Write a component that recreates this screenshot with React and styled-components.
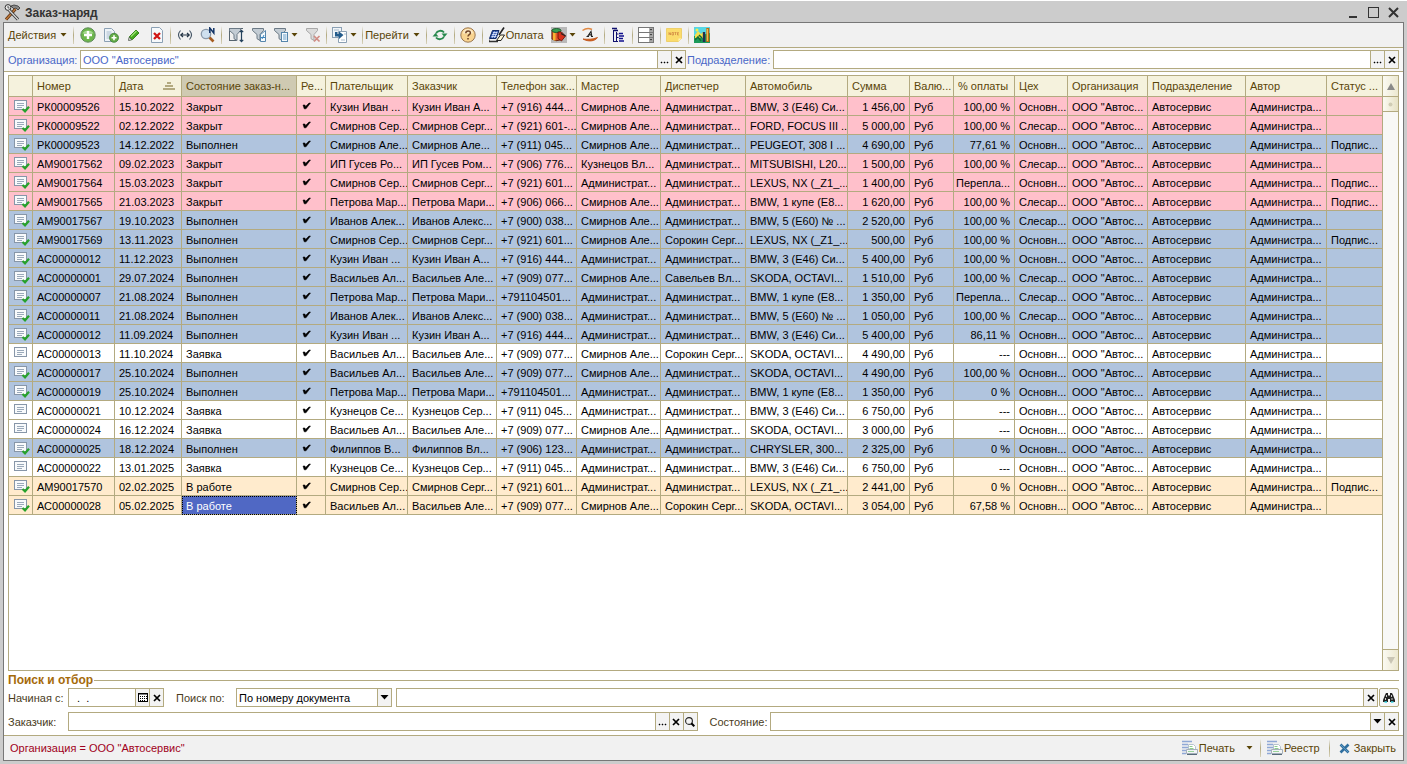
import React, { useState } from 'react';
import styled, { createGlobalStyle, css } from 'styled-components';

const LINE = '#b3aa80';
const BROWN = '#5a4508';

const ROWS = [
    ['closed', 'РК00009526', '15.10.2022', 'Закрыт', 'Кузин Иван ...', 'Кузин Иван А...', '+7 (916) 444...', 'Смирнов Але...', 'Администрат...', 'BMW, 3 (E46) Си...', '1 456,00', '100,00 %', 'Основн...', ''],
    ['closed', 'РК00009522', '02.12.2022', 'Закрыт', 'Смирнов Сер...', 'Смирнов Серг...', '+7 (921) 601-...', 'Смирнов Але...', 'Администрат...', 'FORD, FOCUS III ...', '5 000,00', '100,00 %', 'Слесар...', ''],
    ['done', 'РК00009523', '14.12.2022', 'Выполнен', 'Смирнов Але...', 'Смирнов Але...', '+7 (911) 045...', 'Смирнов Але...', 'Администрат...', 'PEUGEOT, 308 I ...', '4 690,00', '77,61 %', 'Основн...', 'Подпис...'],
    ['closed', 'АМ90017562', '09.02.2023', 'Закрыт', 'ИП Гусев Ро...', 'ИП Гусев Ром...', '+7 (906) 776...', 'Кузнецов Вл...', 'Администрат...', 'MITSUBISHI, L20...', '1 500,00', '100,00 %', 'Слесар...', ''],
    ['closed', 'АМ90017564', '15.03.2023', 'Закрыт', 'Смирнов Сер...', 'Смирнов Серг...', '+7 (921) 601...', 'Администрат...', 'Администрат...', 'LEXUS, NX (_Z1_...', '1 400,00', 'Перепла...', 'Основн...', 'Подпис...'],
    ['closed', 'АМ90017565', '21.03.2023', 'Закрыт', 'Петрова Мар...', 'Петрова Мари...', '+7 (906) 066...', 'Смирнов Але...', 'Администрат...', 'BMW, 1 купе (E8...', '1 620,00', '100,00 %', 'Слесар...', 'Подпис...'],
    ['done', 'АМ90017567', '19.10.2023', 'Выполнен', 'Иванов Алек...', 'Иванов Алекс...', '+7 (900) 038...', 'Смирнов Але...', 'Администрат...', 'BMW, 5 (E60) № ...', '2 520,00', '100,00 %', 'Слесар...', ''],
    ['done', 'АМ90017569', '13.11.2023', 'Выполнен', 'Смирнов Сер...', 'Смирнов Серг...', '+7 (921) 601...', 'Смирнов Але...', 'Сорокин Серг...', 'LEXUS, NX (_Z1_...', '500,00', '100,00 %', 'Основн...', 'Подпис...'],
    ['done', 'АС00000012', '11.12.2023', 'Выполнен', 'Кузин Иван ...', 'Кузин Иван А...', '+7 (916) 444...', 'Администрат...', 'Администрат...', 'BMW, 3 (E46) Си...', '5 400,00', '100,00 %', 'Основн...', ''],
    ['done', 'АС00000001', '29.07.2024', 'Выполнен', 'Васильев Ал...', 'Васильев Але...', '+7 (909) 077...', 'Смирнов Але...', 'Савельев Вл...', 'SKODA, OCTAVI...', '1 510,00', '100,00 %', 'Слесар...', ''],
    ['done', 'АС00000007', '21.08.2024', 'Выполнен', 'Петрова Мар...', 'Петрова Мари...', '+791104501...', 'Администрат...', 'Администрат...', 'BMW, 1 купе (E8...', '1 350,00', 'Перепла...', 'Слесар...', ''],
    ['done', 'АС00000011', '21.08.2024', 'Выполнен', 'Иванов Алек...', 'Иванов Алекс...', '+7 (900) 038...', 'Администрат...', 'Администрат...', 'BMW, 5 (E60) № ...', '1 050,00', '100,00 %', 'Слесар...', ''],
    ['done', 'АС00000012', '11.09.2024', 'Выполнен', 'Кузин Иван ...', 'Кузин Иван А...', '+7 (916) 444...', 'Администрат...', 'Администрат...', 'BMW, 3 (E46) Си...', '5 400,00', '86,11 %', 'Основн...', ''],
    ['request', 'АС00000013', '11.10.2024', 'Заявка', 'Васильев Ал...', 'Васильев Але...', '+7 (909) 077...', 'Смирнов Але...', 'Сорокин Серг...', 'SKODA, OCTAVI...', '4 490,00', '---', 'Основн...', ''],
    ['done', 'АС00000017', '25.10.2024', 'Выполнен', 'Васильев Ал...', 'Васильев Але...', '+7 (909) 077...', 'Смирнов Але...', 'Администрат...', 'SKODA, OCTAVI...', '4 490,00', '100,00 %', 'Основн...', ''],
    ['done', 'АС00000019', '25.10.2024', 'Выполнен', 'Петрова Мар...', 'Петрова Мари...', '+791104501...', 'Администрат...', 'Администрат...', 'BMW, 1 купе (E8...', '1 350,00', '0 %', 'Основн...', ''],
    ['request', 'АС00000021', '10.12.2024', 'Заявка', 'Кузнецов Се...', 'Кузнецов Сер...', '+7 (911) 045...', 'Администрат...', 'Администрат...', 'BMW, 3 (E46) Си...', '6 750,00', '---', 'Основн...', ''],
    ['request', 'АС00000024', '16.12.2024', 'Заявка', 'Васильев Ал...', 'Васильев Але...', '+7 (909) 077...', 'Смирнов Але...', 'Администрат...', 'SKODA, OCTAVI...', '3 000,00', '---', 'Основн...', ''],
    ['done', 'АС00000025', '18.12.2024', 'Выполнен', 'Филиппов В...', 'Филиппов Вл...', '+7 (906) 123...', 'Администрат...', 'Администрат...', 'CHRYSLER, 300...', '2 325,00', '0 %', 'Основн...', ''],
    ['request', 'АС00000022', '13.01.2025', 'Заявка', 'Кузнецов Се...', 'Кузнецов Сер...', '+7 (911) 045...', 'Администрат...', 'Администрат...', 'BMW, 3 (E46) Си...', '6 750,00', '---', 'Основн...', ''],
    ['work', 'АМ90017570', '02.02.2025', 'В работе', 'Смирнов Сер...', 'Смирнов Серг...', '+7 (921) 601...', 'Администрат...', 'Администрат...', 'LEXUS, NX (_Z1_...', '2 441,00', '0 %', 'Основн...', 'Подпис...'],
    ['work', 'АС00000028', '05.02.2025', 'В работе', 'Васильев Ал...', 'Васильев Але...', '+7 (909) 077...', 'Смирнов Але...', 'Сорокин Серг...', 'SKODA, OCTAVI...', '3 054,00', '67,58 %', 'Основн...', ''],
];

const COLUMNS = [
    ['', 24], ['Номер', 82], ['Дата', 67], ['Состояние заказ-н...', 115], ['Ре...', 29],
    ['Плательщик', 82], ['Заказчик', 89], ['Телефон зак...', 80], ['Мастер', 84], ['Диспетчер', 85],
    ['Автомобиль', 102], ['Сумма', 62], ['Валю...', 44], ['% оплаты', 61], ['Цех', 53],
    ['Организация', 80], ['Подразделение', 98], ['Автор', 81], ['Статус ...', 56],
];

const ROW_COLORS = {
    closed: '#ffc0cb',
    done: '#b0c4de',
    request: '#ffffff',
    work: '#ffebcd',
};

/* ---------- icons ---------- */

const Svg = ({ w = 16, h = 16, children }) => (
    <svg width={w} height={h} viewBox={`0 0 ${w} ${h}`} fill="none" aria-hidden="true">{children}</svg>
);

const Caret = ({ color = BROWN, big }) => (
    big
        ? <Svg w={9} h={5}><path d="M0.500 0h8L4.500 4.500z" fill={color} /></Svg>
        : <Svg w={7} h={4}><path d="M0.500 0h6L3.500 3.500z" fill={color} /></Svg>
);

const CrossIcon = () => (
    <Svg w={8} h={8}><path d="M1 1l6 6M7 1L1 7" stroke="#000" strokeWidth="1.7" /></Svg>
);

const DotsIcon = () => (
    <Svg w={9} h={8}><path d="M1 6h1v1H1zM4 6h1v1H4zM7 6h1v1H7z" fill="#000" stroke="#000" strokeWidth="0.5" /></Svg>
);

const CalendarIcon = () => (
    <Svg w={10} h={9}>
        <rect x="0.5" y="0.5" width="9" height="8" fill="#fff" stroke="#000" />
        <path d="M0 1h10" stroke="#000" />
        <path d="M2 3h1v1H2zM4 3h1v1H4zM6 3h1v1H6zM8 3h1v1H8zM2 5h1v1H2zM4 5h1v1H4zM6 5h1v1H6zM8 5h1v1H8zM2 7h1v1H2zM4 7h1v1H4zM6 7h1v1H6z" fill="#000" />
    </Svg>
);

const LensIcon = () => (
    <Svg w={10} h={10}>
        <circle cx="4" cy="4" r="3.4" stroke="#222" strokeWidth="1.1" />
        <path d="M6.3 6.3L9.3 9.3" stroke="#000" strokeWidth="2" />
    </Svg>
);

const BinocularsIcon = () => (
    <Svg w={12} h={12}>
        <path d="M3 1h2v2l1 1 1-1V1h2l1 2 2 5v2H7V7H5v3H0V8l2-5z" fill="#222" />
        <path d="M1.5 10h2.5M8 10h2.5" stroke="#38d8e8" strokeWidth="1.6" />
        <path d="M3.5 3v2M8.5 3v2M2.5 6v2M9 6v2" stroke="#ddd" strokeWidth="0.9" />
    </Svg>
);

const ToolsIcon = () => (
    <Svg w={17} h={17}>
        <circle cx="4" cy="3.5" r="2.9" fill="#e8e8e8" stroke="#333" />
        <path d="M4 2v2h1.5" stroke="#333" strokeWidth="0.8" />
        <path d="M7 2l3-1 4 1 2 2-2 2-2-2-2 1z" fill="#888" stroke="#333" strokeWidth="0.8" />
        <path d="M11.5 5L2 15.5" stroke="#5b2f10" strokeWidth="3" />
        <path d="M11.5 5L2 15.5" stroke="#c07b3c" strokeWidth="1.4" />
        <path d="M5 6l9 9.5" stroke="#333" strokeWidth="3" />
        <path d="M5 6l9 9.5" stroke="#d8d8d8" strokeWidth="1.3" />
    </Svg>
);

const AddIcon = () => (
    <Svg>
        <circle cx="8" cy="8" r="7.2" fill="#6cb64c" stroke="#5f8a5c" />
        <path d="M2.5 6.5a6 5 0 0111 0z" fill="#a5d890" />
        <path d="M8 4v8M4 8h8" stroke="#fff" strokeWidth="2.4" />
    </Svg>
);

const CopyIcon = () => (
    <Svg>
        <path d="M1.5 1.5h7l3 3v10h-10z" fill="#eef3f8" stroke="#8ba0b4" />
        <path d="M3.5 5h5M3.5 7h5M3.5 9h3M3.5 11h3" stroke="#a9bccd" />
        <circle cx="11" cy="10.8" r="4.5" fill="#62ab47" stroke="#3e7f3a" strokeWidth="0.8" />
        <path d="M11 8.3v5M8.5 10.8h5" stroke="#fff" strokeWidth="1.6" />
    </Svg>
);

const PencilIcon = () => (
    <Svg>
        <path d="M3.5 9.5L10 3l3 3-6.5 6.5-3.5.5z" fill="#45a81e" stroke="#2b7a12" strokeWidth="0.9" />
        <path d="M5 9.5l5.5-5.5" stroke="#9be372" strokeWidth="1.3" />
        <path d="M2.5 13.5l.8-3.2 2.4 2.4z" fill="#fff" stroke="#444" strokeWidth="0.7" />
    </Svg>
);

const DeleteIcon = () => (
    <Svg>
        <path d="M2.5 0.5h8l3 3v12h-11z" fill="#f6f9fc" stroke="#8ba0b4" />
        <path d="M5 6l6 6M11 6l-6 6" stroke="#d01616" strokeWidth="2.3" />
    </Svg>
);

const WidthIcon = () => (
    <Svg>
        <path d="M3.5 3.5Q-0.5 8 3.5 12.5M12.5 3.5Q16.5 8 12.5 12.5" stroke="#456" strokeWidth="1.1" />
        <path d="M3.5 8h9M6 6L3.8 8 6 10M10 6l2.2 2L10 10" stroke="#234" strokeWidth="1.2" />
    </Svg>
);

const FindIcon = () => (
    <Svg>
        <circle cx="6" cy="7" r="4.7" fill="#cfe0ef" stroke="#8a99aa" strokeWidth="1.3" />
        <path d="M9.5 10.5l4 4" stroke="#a65c20" strokeWidth="2.6" />
        <path d="M9.8 6V1l4 5V1" stroke="#113366" strokeWidth="1.5" />
    </Svg>
);

const Funnel = ({ off }) => (
    <path d="M1.5 1.5h11v2L9 7.5v6l-3-1.8V7.5l-4.5-4z" fill={off ? '#dcdcdc' : '#c3ccd4'} stroke={off ? '#a8a8a8' : '#6c7a86'} />
);

const FilterSortIcon = () => (
    <Svg>
        <path d="M1.5 1v13M1 1.5h14M1 13.5h8" stroke="#56646f" />
        <Funnel />
        <path d="M13.5 3.5v11M11.8 5.2l1.700-1.800 1.700 1.800M11.800 12.800l1.700 1.800 1.700-1.800" stroke="#23415c" strokeWidth="1.2" />
    </Svg>
);

const FilterValueIcon = () => (
    <Svg>
        <Funnel />
        <path d="M9.5 7.5l5-4v11h-5z" fill="#f6fafd" stroke="#5686ac" />
        <path d="M11 12l2-4M10 10.5h4" stroke="#3c85bd" />
    </Svg>
);

const FilterListIcon = () => (
    <Svg>
        <Funnel />
        <rect x="8.5" y="5.5" width="6" height="9" fill="#f6fafd" stroke="#5686ac" />
        <path d="M10 8h3.5M10 10h3.5M10 12h3.5" stroke="#6b9fc9" />
    </Svg>
);

const FilterOffIcon = () => (
    <Svg>
        <Funnel off />
        <path d="M9 9l5.5 5.5M14.5 9L9 14.5" stroke="#d08c84" strokeWidth="1.7" />
    </Svg>
);

const EnterOnIcon = () => (
    <Svg>
        <rect x="0.5" y="0.5" width="9" height="10" fill="#f1f5f9" stroke="#8ba0b4" />
        <path d="M6.5 4.5h8v11h-8z" fill="#fff" stroke="#8ba0b4" />
        <path d="M2 3h5M12 7h2M9 13h4" stroke="#a9bccd" />
        <path d="M3 5v4.500h4V12l4.500-4L7 4.500V7H5.500V5z" fill="#245c8c" />
    </Svg>
);

const RefreshIcon = () => (
    <Svg>
        <path d="M4 6.5a4.500 4 0 018-1M12 9.500a4.500 4 0 01-8 1" stroke="#26884c" strokeWidth="1.8" />
        <path d="M9.5 6.5h6L12.5 10z" fill="#26884c" />
        <path d="M0.5 9.5h6L3.5 6z" fill="#26884c" />
    </Svg>
);

const HelpIcon = () => (
    <Svg>
        <circle cx="8" cy="8" r="7.2" fill="#f9d491" stroke="#9b7750" />
        <path d="M3 6.5a5 4.500 0 0110 0z" fill="#fdebc8" />
        <path d="M5.8 6.200c0-3 4.600-3 4.600-.3C10.400 7.600 8 7.800 8 9.500" stroke="#74472a" strokeWidth="1.5" />
        <path d="M7.2 11h1.600v1.600H7.200z" fill="#74472a" />
    </Svg>
);

const PaymentIcon = () => (
    <Svg>
        <path d="M3.5 3.5h6.500L7 11.500H0.500z" fill="#2b50a8" stroke="#122a66" />
        <path d="M4 5.500h4.500M3 7.500h5M2.300 9.500h5M5.500 4.500L3 11M8 4.500L5.500 11" stroke="#dfe8ff" strokeWidth="0.8" />
        <path d="M15 0.500L10 8" stroke="#222" strokeWidth="1.6" />
        <path d="M0 12.500v2h9" stroke="#333" strokeWidth="1.3" />
        <path d="M7.500 13.500l4-5.500h4l-3.500 5.500z" fill="#fff8d8" stroke="#222" />
    </Svg>
);

const BarrelIcon = () => (
    <Svg>
        <rect width="16" height="16" fill="#b9b9b9" />
        <path d="M1 3v9q4 3 8 1V4z" fill="#e4582a" stroke="#6f2a10" />
        <path d="M2 5v8l2.500 .8V6z" fill="#f7b532" />
        <ellipse cx="5.5" cy="3.5" rx="4.5" ry="2" fill="#3aa052" stroke="#1f5b30" />
        <path d="M7 5h3.500l4 4-4 5L7 11.500z" fill="#d8321d" stroke="#5c1009" strokeWidth="0.8" />
        <path d="M10 6.500l4.500 2.500" stroke="#222" strokeWidth="1.2" />
    </Svg>
);

const SwooshIcon = () => (
    <Svg>
        <path d="M0.500 3.500C4 1 8 1.500 10 2.500" stroke="#e08842" strokeWidth="1.5" />
        <path d="M1 12c5 3 12 2.500 14.500-1.500C11 12.500 5 12.500 1 12z" fill="#d9651c" stroke="#b9480c" strokeWidth="0.8" />
        <path d="M5.500 9.500L9 4.500l.8 5M7 7.800h3M4.500 9.500h2.500M9 9.500h2" stroke="#222" strokeWidth="1.2" />
    </Svg>
);

const TreeIcon = () => (
    <Svg>
        <path d="M2 1.500h5M4 3.500h4" stroke="#10106e" strokeWidth="1.5" />
        <path d="M3.500 3v12M3.500 14.500H8M6.500 5v9M6.500 7h2M6.500 10.500h2" stroke="#10106e" />
        <path d="M9 6.500h4M9 9h5M9 11.500h4M9 14h5" stroke="#10108e" strokeWidth="1.5" />
    </Svg>
);

const CardsIcon = () => (
    <Svg>
        {[0, 5, 10].map((y) => (
            <g key={y}>
                <rect x="0.5" y={y + 0.5} width="15" height="5" fill="#fff" stroke="#777" />
                <path d={`M11 ${y + 1}h4v4h-4z`} fill="#aaa" />
                <path d={`M12 ${y + 2}h2l-1 1.5z`} fill="#111" />
            </g>
        ))}
    </Svg>
);

const NoteIcon = () => (
    <Svg>
        <path d="M0.5 1.5h15v10l-3 3h-12z" fill="#fbdc6c" stroke="#eed06a" />
        <path d="M12.5 14.5v-3h3z" fill="#fff3b5" />
        <path d="M3 8V5.500L4.500 8V5.500M6 5.500h1.500V8H6zM8.500 5.500h2M9.500 5.500V8M12.800 5.500h-1.300V8h1.300M11.500 6.800h1.200" stroke="#cf8240" strokeWidth="0.7" />
    </Svg>
);

const MapIcon = () => (
    <Svg>
        <rect width="16" height="16" fill="#1c9a5a" />
        <path d="M0 0h16v6L4 9H0z" fill="#56d7e4" />
        <path d="M1 8l3-4 3 3 2-2v6H1z" fill="#f4e04d" />
        <path d="M1 13l3-3 3 4M5 8l3 3" stroke="#106c33" strokeWidth="1.5" />
        <circle cx="3" cy="3" r="1.5" fill="#f3f04a" />
        <path d="M10 5v10" stroke="#203050" strokeWidth="2.4" />
        <path d="M13.800 1v14" stroke="#c3690f" strokeWidth="3" />
        <path d="M13.300 2v12" stroke="#f9e26d" strokeWidth="0.9" />
    </Svg>
);

const PrintIcon = () => (
    <Svg>
        <path d="M0 1.500h10M0 4.500h6M0 7.500h6M0 10.500h4M0 13.500h4" stroke="#8fa8d6" strokeWidth="1.6" />
        <path d="M6.500 4.500h5l2 2v4h-7z" fill="#fff" stroke="#b5c2ce" />
        <path d="M7.500 6.500h3M7.500 8.500h4" stroke="#8ccf8c" />
        <path d="M4.500 9.500h11v4h-11z" fill="#f1f4f6" stroke="#a5b0ba" />
        <path d="M6 11.500h6" stroke="#9ad49a" />
        <path d="M5 14.500h10" stroke="#56697a" />
    </Svg>
);

const CloseBlueIcon = () => (
    <Svg w={11} h={11}>
        <path d="M1.500 1.500l8 8M9.500 1.500l-8 8" stroke="#2f6f9f" strokeWidth="2.6" />
        <path d="M2 2l7 7" stroke="#6ba5cf" strokeWidth="0.8" />
    </Svg>
);

const DocIcon = ({ posted }) => (
    <Svg w={16} h={13}>
        <rect x="0.5" y="0.5" width="12" height="9" fill="#f8fafc" stroke="#8796a8" />
        <path d="M3 3.500h7M3 5.500h7M3 7.500h5" stroke="#9aa9ba" />
        {posted && <path d="M8.500 9l2.500 2.300 4-4.600" stroke="#27a22b" strokeWidth="2.2" />}
    </Svg>
);

const TickIcon = () => (
    <Svg w={9} h={10}><path d="M1 4l2 0 .5 1.500L7 2h1.500L4 7.800H2.200z" fill="#000" stroke="#000" strokeWidth="0.5" /></Svg>
);

const SortIcon = () => (
    <Svg w={12} h={8}>
        <path d="M4 1h4M2 4h8M0 7h12" stroke="#b3aa80" strokeWidth="2" />
    </Svg>
);

/* ---------- page ---------- */

const App = () => {
    const [organization, setOrganization] = useState('ООО "Автосервис"');
    const [department, setDepartment] = useState('');
    const [startDate, setStartDate] = useState('  .  .');
    const [query, setQuery] = useState('');
    const [customer, setCustomer] = useState('');

    return (
        <Window>
            <GlobalStyle />
            <TitleBar>
                <ToolsIcon />
                <Title>Заказ-наряд</Title>
                <TitleButton aria-label="Свернуть"><Svg w={10} h={10}><path d="M1 9h8" stroke="#333" strokeWidth="2" /></Svg></TitleButton>
                <TitleButton aria-label="Развернуть"><Svg w={11} h={11}><rect x="0.5" y="0.5" width="10" height="10" stroke="#333" /></Svg></TitleButton>
                <TitleButton aria-label="Закрыть окно"><Svg w={11} h={11}><path d="M1 1l9 9M10 1l-9 9" stroke="#333" strokeWidth="2" /></Svg></TitleButton>
            </TitleBar>
            <Frame>
                <Toolbar>
                    <TextTool>Действия <Caret /></TextTool>
                    <Separator />
                    <Tool aria-label="Добавить"><AddIcon /></Tool>
                    <Tool aria-label="Скопировать"><CopyIcon /></Tool>
                    <Tool aria-label="Изменить"><PencilIcon /></Tool>
                    <Tool aria-label="Удалить"><DeleteIcon /></Tool>
                    <Separator />
                    <Tool aria-label="Интервал"><WidthIcon /></Tool>
                    <Tool aria-label="Найти по номеру"><FindIcon /></Tool>
                    <Separator />
                    <Tool aria-label="Отбор и сортировка"><FilterSortIcon /></Tool>
                    <Tool aria-label="Отбор по значению"><FilterValueIcon /></Tool>
                    <Tool $menu aria-label="История отборов"><FilterListIcon /><Caret /></Tool>
                    <Tool aria-label="Отключить отбор"><FilterOffIcon /></Tool>
                    <Separator />
                    <Tool $menu aria-label="Ввести на основании"><EnterOnIcon /><Caret /></Tool>
                    <Separator />
                    <TextTool>Перейти <Caret /></TextTool>
                    <Separator />
                    <Tool aria-label="Обновить"><RefreshIcon /></Tool>
                    <Separator />
                    <Tool aria-label="Справка"><HelpIcon /></Tool>
                    <Separator />
                    <IconTextTool><PaymentIcon />Оплата</IconTextTool>
                    <Tool $menu aria-label="Материалы"><BarrelIcon /><Caret /></Tool>
                    <Tool aria-label="Автор"><SwooshIcon /></Tool>
                    <Separator />
                    <Tool aria-label="Структура"><TreeIcon /></Tool>
                    <Separator />
                    <Tool aria-label="Карточки"><CardsIcon /></Tool>
                    <Separator />
                    <Tool aria-label="Заметка"><NoteIcon /></Tool>
                    <Separator />
                    <Tool aria-label="Карта"><MapIcon /></Tool>
                </Toolbar>

                <FilterBar>
                    <FilterLabel htmlFor="org">Организация:</FilterLabel>
                    <Field>
                        <Input id="org" $blue value={organization} onChange={(e) => setOrganization(e.target.value)} />
                        <FieldButton aria-label="Выбрать организацию"><DotsIcon /></FieldButton>
                        <FieldButton aria-label="Очистить организацию" onClick={() => setOrganization('')}><CrossIcon /></FieldButton>
                    </Field>
                    <FilterLabel htmlFor="dep">Подразделение:</FilterLabel>
                    <Field>
                        <Input id="dep" $blue value={department} onChange={(e) => setDepartment(e.target.value)} />
                        <FieldButton aria-label="Выбрать подразделение"><DotsIcon /></FieldButton>
                        <FieldButton aria-label="Очистить подразделение" onClick={() => setDepartment('')}><CrossIcon /></FieldButton>
                    </Field>
                </FilterBar>

                <Body>
                    <Grid>
                        <TableArea>
                            <Table>
                                <colgroup>
                                    {COLUMNS.map(([name, width]) => <col key={name} style={{ width }} />)}
                                </colgroup>
                                <thead>
                                    <tr>
                                        {COLUMNS.map(([name], i) => (
                                            <Th key={name} $active={i === 3}>
                                                {i === 2 ? <SortHead>{name}<SortIcon /></SortHead> : name}
                                            </Th>
                                        ))}
                                    </tr>
                                </thead>
                                <tbody>
                                    {ROWS.map(([kind, num, date, state, payer, client, phone, master, manager, car, sum, paid, shop, status], i) => (
                                        <Row key={i} $kind={kind}>
                                            <Td $icon><DocIcon posted={kind !== 'request'} /></Td>
                                            <Td>{num}</Td>
                                            <Td>{date}</Td>
                                            <Td $selected={i === ROWS.length - 1}>{state}</Td>
                                            <Td $icon><TickIcon /></Td>
                                            <Td>{payer}</Td>
                                            <Td>{client}</Td>
                                            <Td>{phone}</Td>
                                            <Td>{master}</Td>
                                            <Td>{manager}</Td>
                                            <Td>{car}</Td>
                                            <Td $right>{sum}</Td>
                                            <Td>Руб</Td>
                                            <Td $right>{paid}</Td>
                                            <Td>{shop}</Td>
                                            <Td>ООО "Автос...</Td>
                                            <Td>Автосервис</Td>
                                            <Td>Администра...</Td>
                                            <Td>{status}</Td>
                                        </Row>
                                    ))}
                                </tbody>
                            </Table>
                        </TableArea>
                        <Scrollbar>
                            <ScrollButton aria-label="Вверх"><Svg w={8} h={7}><path d="M4 0l4 7H0z" fill="#8a8a88" /></Svg></ScrollButton>
                            <Thumb><Svg w={5} h={5}><circle cx="2.5" cy="2.5" r="2" fill="#d0ccb4" /></Svg></Thumb>
                            <Track />
                            <ScrollButton $end aria-label="Вниз"><Svg w={8} h={7}><path d="M4 7l4-7H0z" fill="#c9c5b4" /></Svg></ScrollButton>
                        </Scrollbar>
                    </Grid>

                    <GroupTitle>Поиск и отбор</GroupTitle>
                    <SearchRow>
                        <Label htmlFor="from">Начиная с:</Label>
                        <Field $width={96}>
                            <Input id="from" value={startDate} onChange={(e) => setStartDate(e.target.value)} />
                            <FieldButton aria-label="Календарь"><CalendarIcon /></FieldButton>
                            <FieldButton aria-label="Очистить дату" onClick={() => setStartDate('')}><CrossIcon /></FieldButton>
                        </Field>
                        <Label htmlFor="by" $second>Поиск по:</Label>
                        <Field $width={156}>
                            <Select id="by"><option>По номеру документа</option></Select>
                            <FieldButton tabIndex={-1} aria-label="Открыть список"><Caret big color="#000" /></FieldButton>
                        </Field>
                        <QueryBox>
                            <Field>
                                <Input aria-label="Строка поиска" value={query} onChange={(e) => setQuery(e.target.value)} />
                                <FieldButton aria-label="Очистить поиск" onClick={() => setQuery('')}><CrossIcon /></FieldButton>
                            </Field>
                            <FindButton aria-label="Найти"><BinocularsIcon /></FindButton>
                        </QueryBox>
                    </SearchRow>
                    <SearchRow>
                        <Label htmlFor="client">Заказчик:</Label>
                        <Field>
                            <Input id="client" value={customer} onChange={(e) => setCustomer(e.target.value)} />
                            <FieldButton aria-label="Выбрать заказчика"><DotsIcon /></FieldButton>
                            <FieldButton aria-label="Очистить заказчика" onClick={() => setCustomer('')}><CrossIcon /></FieldButton>
                            <FieldButton aria-label="Открыть заказчика"><LensIcon /></FieldButton>
                        </Field>
                        <Label htmlFor="state" $second>Состояние:</Label>
                        <Field>
                            <Select id="state"><option value="" aria-label="Любое" /></Select>
                            <FieldButton tabIndex={-1} aria-label="Открыть состояния"><Caret big color="#000" /></FieldButton>
                            <FieldButton aria-label="Очистить состояние"><CrossIcon /></FieldButton>
                        </Field>
                    </SearchRow>
                </Body>

                <StatusBar>
                    <StatusText>Организация = ООО "Автосервис"</StatusText>
                    <StatusTool><PrintIcon />Печать</StatusTool>
                    <MenuTool aria-label="Варианты печати"><Caret /></MenuTool>
                    <Separator />
                    <StatusTool><PrintIcon />Реестр</StatusTool>
                    <Separator />
                    <CloseTool><CloseBlueIcon />Закрыть</CloseTool>
                </StatusBar>
            </Frame>
        </Window>
    );
};

const GlobalStyle = createGlobalStyle`
    * {
        box-sizing: border-box;
    }
    body {
        margin: 0;
    }
    body, button, input, select {
        font-family: "Liberation Sans", Arial, sans-serif;
        font-size: 11px;
        line-height: 14px;
    }
    button {
        padding: 0;
        border: 0;
        background: none;
        color: inherit;
    }
    svg {
        display: block;
        flex: none;
    }
`;

const Window = styled.div`
    display: flex;
    flex-direction: column;
    height: 100vh;
    padding: 0 3px 3px;
    background: #cccccc;
    border-top: 1px solid #ffffff;
`;

const TitleBar = styled.header`
    display: flex;
    align-items: center;
    gap: 4px;
    height: 21px;
    padding: 2px 3px 0 1px;
`;

const Title = styled.h1`
    flex: 1;
    margin: 0;
    font-size: 12px;
    line-height: 16px;
    font-weight: bold;
    color: #333333;
`;

const TitleButton = styled.button`
    display: flex;
    align-items: center;
    justify-content: center;
    width: 16px;
    height: 16px;
`;

const Frame = styled.main`
    flex: 1;
    min-height: 0;
    display: flex;
    flex-direction: column;
    border: 1px solid #777777;
    background: #ffffff;
`;

const Toolbar = styled.div`
    display: flex;
    align-items: center;
    height: 25px;
    padding-left: 4px;
    background: #f1f1f1;
    border-bottom: 1px solid ${LINE};
    color: ${BROWN};
`;

const Tool = styled.button`
    display: flex;
    align-items: center;
    justify-content: center;
    gap: 2px;
    width: ${(props) => (props.$menu ? '31px' : '23px')};
    height: 22px;
`;

const MenuTool = styled(Tool)`
    width: 16px;
`;

const TextTool = styled.button`
    display: flex;
    align-items: center;
    gap: 4px;
    height: 22px;
    padding: 0 4px 0 0;
    white-space: nowrap;
`;

const IconTextTool = styled(TextTool)`
    gap: 1px;
    padding-left: 4px;
`;

const StatusTool = styled(TextTool)`
    gap: 1px;
    padding: 0 7px 0 4px;
`;

const CloseTool = styled(TextTool)`
    padding-left: 7px;
`;

const Separator = styled.span`
    width: 1px;
    height: 18px;
    margin: 0 2px;
    background: linear-gradient(#f1f1f1, ${LINE} 50%, #d8d3bd);
`;

const FilterBar = styled.div`
    display: grid;
    grid-template-columns: 71px 606fr 85px 626fr;
    column-gap: 1px;
    align-items: center;
    height: 24px;
    padding: 0 4px;
    background: #f7f7f7;
    border-bottom: 1px solid ${LINE};
`;

const FilterLabel = styled.label`
    color: #4a68c8;
    white-space: nowrap;
`;

const Field = styled.div`
    display: flex;
    height: 19px;
    min-width: 0;
    border: 1px solid ${LINE};
    background: #ffffff;
    ${(props) => (props.$width ? css`width: ${props.$width}px;` : css`flex: 1;`)}
`;

const Input = styled.input`
    flex: 1;
    min-width: 0;
    border: 0;
    outline: 0;
    background: transparent;
    padding: 0 2px;
    color: ${(props) => (props.$blue ? '#4a68c8' : '#000000')};
    white-space: pre;
`;

const Select = styled.select`
    flex: 1;
    min-width: 0;
    appearance: none;
    border: 0;
    outline: 0;
    background: transparent;
    padding: 0 2px;
    color: #000000;
`;

const FieldButton = styled.button`
    display: flex;
    align-items: center;
    justify-content: center;
    flex: none;
    width: 14px;
    background: #f3f3f3;
    border-left: 1px solid ${LINE};
`;

const Body = styled.div`
    flex: 1;
    min-height: 0;
    display: flex;
    flex-direction: column;
    padding: 3px 4px 4px;
`;

const Grid = styled.div`
    flex: 1;
    min-height: 0;
    display: flex;
    border: 1px solid ${LINE};
`;

const TableArea = styled.div`
    flex: 1;
    min-width: 0;
    overflow: hidden;
`;

const Table = styled.table`
    width: 100%;
    table-layout: fixed;
    border-collapse: separate;
    border-spacing: 0;
`;

const Th = styled.th`
    height: 21px;
    padding: 0 0 0 4px;
    overflow: hidden;
    text-align: left;
    white-space: nowrap;
    font-weight: normal;
    color: ${BROWN};
    background: ${(props) => (props.$active ? '#cfcab2' : '#f5f2dd')};
    border-right: 1px solid ${LINE};
    border-bottom: 1px solid ${LINE};
    &:last-child {
        border-right: 0;
    }
`;

const SortHead = styled.span`
    display: flex;
    align-items: center;
    justify-content: space-between;
    padding-right: 6px;
`;

const Row = styled.tr`
    background: ${(props) => ROW_COLORS[props.$kind]};
`;

const Td = styled.td`
    height: 19px;
    padding: ${(props) => (props.$right ? '2px 4px 0 0' : '2px 0 0 4px')};
    overflow: hidden;
    white-space: nowrap;
    color: #000000;
    text-align: ${(props) => (props.$right ? 'right' : 'left')};
    border-right: 1px solid ${LINE};
    border-bottom: 1px solid ${LINE};
    &:last-child {
        border-right: 0;
    }
    ${(props) => props.$icon && css`
        padding: 0 0 0 5px;
    `}
    ${(props) => props.$selected && css`
        color: #ffffff;
        background: #5068c4;
        outline: 1px dotted #000000;
        outline-offset: -1px;
    `}
`;

const Scrollbar = styled.div`
    display: flex;
    flex-direction: column;
    width: 16px;
    background: #f8f8f6;
    border-left: 1px solid ${LINE};
`;

const ScrollButton = styled.button`
    display: flex;
    align-items: center;
    justify-content: center;
    height: 21px;
    background: linear-gradient(90deg, #fbfaf2, #ece8d0);
    border-bottom: ${(props) => (props.$end ? '0' : `1px solid ${LINE}`)};
    border-top: ${(props) => (props.$end ? `1px solid ${LINE}` : '0')};
`;

const Thumb = styled.div`
    display: flex;
    align-items: center;
    justify-content: center;
    height: 15px;
    background: linear-gradient(90deg, #fbfaf2, #e6e1c4);
    border-bottom: 1px solid ${LINE};
`;

const Track = styled.div`
    flex: 1;
`;

const GroupTitle = styled.h2`
    display: flex;
    align-items: center;
    margin: 2px 0 1px;
    font-size: 12px;
    line-height: 14px;
    font-weight: bold;
    color: #a56a0a;
    &::after {
        content: '';
        flex: 1;
        height: 1px;
        margin-left: 1px;
        background: ${LINE};
    }
`;

const SearchRow = styled.div`
    display: flex;
    align-items: center;
    & + & {
        margin-top: 5px;
    }
`;

const Label = styled.label`
    flex: none;
    width: ${(props) => (props.$second ? '72px' : '60px')};
    padding-left: ${(props) => (props.$second ? '12px' : '0')};
    color: #4a3c1c;
    white-space: nowrap;
`;

const QueryBox = styled.div`
    flex: 1;
    display: flex;
    gap: 1px;
    margin-left: 4px;
`;

const FindButton = styled.button`
    display: flex;
    align-items: center;
    justify-content: center;
    width: 20px;
    height: 19px;
    border: 1px solid ${LINE};
    border-radius: 2px;
    background: #f7f7f7;
`;

const StatusBar = styled.footer`
    display: flex;
    align-items: center;
    height: 25px;
    padding: 0 3px 0 6px;
    background: #f1f1f1;
    border-top: 1px solid ${LINE};
    color: ${BROWN};
`;

const StatusText = styled.span`
    flex: 1;
    color: #a00020;
`;

export default App;
